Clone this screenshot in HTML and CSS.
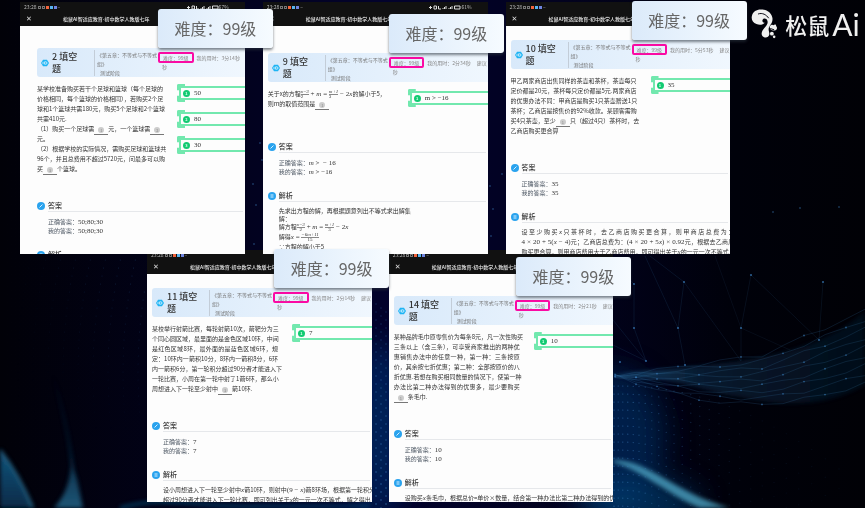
FILE: index.html
```html
<!DOCTYPE html>
<html lang="zh-CN">
<head>
  <meta charset="UTF-8">
  <meta name="viewport" content="width=device-width, initial-scale=1.0">
  <title>松鼠Ai</title>
  <link rel="stylesheet" href="styles.css">
</head>
<body>
  <svg class="backdrop" viewBox="0 0 865 508" preserveAspectRatio="none" aria-hidden="true">
    <defs>
      <filter id="soft" x="-50%" y="-50%" width="200%" height="200%"><feGaussianBlur stdDeviation="2"/></filter>
      <filter id="glow" x="-50%" y="-50%" width="200%" height="200%"><feGaussianBlur stdDeviation="14"/></filter>
      <linearGradient id="beam" x1="0" y1="0" x2="0" y2="1">
        <stop offset="0" stop-color="#0b4a78" stop-opacity="0"/>
        <stop offset="1" stop-color="#2a7ba3"/>
      </linearGradient>
      <linearGradient id="hill" x1="0" y1="0" x2="0" y2="1">
        <stop offset="0" stop-color="#15557c"/>
        <stop offset="1" stop-color="#062a48"/>
      </linearGradient>
      <linearGradient id="ribbon" x1="0" y1="0" x2="1" y2="0">
        <stop offset="0" stop-color="#2d7fae" stop-opacity=".8"/>
        <stop offset=".35" stop-color="#164a70" stop-opacity=".5"/>
        <stop offset="1" stop-color="#0c2c4a" stop-opacity=".4"/>
      </linearGradient>
    </defs>
    <g filter="url(#glow)">
      <ellipse cx="612" cy="440" rx="52" ry="70" fill="#04306a" opacity=".6"/>
      <ellipse cx="380" cy="430" rx="26" ry="90" fill="#042c6c" opacity=".7"/>
      <ellipse cx="640" cy="505" rx="60" ry="26" fill="#075089" opacity=".5"/>
    </g>
    <g filter="url(#soft)">
      <path d="M52 370C62 400 70 440 74 470C78 480 80 495 83 508H54C66 495 70 480 71 465C68 430 58 400 52 370Z" fill="url(#beam)" opacity=".7"/>
      <path d="M0 450C12 465 24 486 33 508H0Z" fill="url(#hill)"/>
      <path d="M0 450C12 465 24 486 33 508" fill="none" stroke="#2a7095" stroke-width="2"/>
      <path d="M613 460C650 460 672 492 730 508H700C668 495 645 472 613 462Z" fill="#4fa9c8" opacity=".75"/>
      <path d="M120 508C160 495 200 508 260 506H370" fill="none" stroke="#0f5f91" stroke-width="3" opacity=".6"/>
    </g>
    <path d="M613 376C690 362 800 370 865 311V385C830 405 790 408 740 397C705 393 690 378 613 376Z" fill="url(#ribbon)" filter="url(#soft)" opacity=".7"/>
    <g id="mesh" fill="none" stroke="#3978a8" stroke-width=".5"></g>
    <g id="dots" fill="#3c80c0"></g>
  </svg>

  <main class="board">
    <div class="row row-top">
      <article class="shot">
        <div class="sheet inset lead-l">
          <header class="bar">
            <div class="status"><span>23:28</span><i class="sig"></i><i class="sig"></i><i class="app o"></i><i class="app b"></i><i class="app p"></i><span>–</span>
              <span class="right"><svg viewBox="0 0 32 5"><path d="M0 2.500H3M1.500 1V4M5 1H7.500V4H5ZM9.500 1V4H12M14 4V3M15.500 4V2M17 4V1M20 4V3M21.500 4V2M23 4V1M25.500 1H31V4H25.500Z"/></svg>67%</span></div>
            <div class="nav"><button class="close" aria-label="关闭">✕</button><h1>松鼠AI智适应教育-初中数学人教版七年</h1></div>
          </header>
          <section class="content">
            <div class="card">
              <h2><svg class="hex" viewBox="0 0 10 10"><path d="M2.500 .8H7.500L10 5L7.500 9.200H2.500L0 5Z"/><path class="in" d="M2.500 3.500V6.500M4.500 3.500H6A1.500 1.500 0 0 1 6 6.500H4.500Z"/></svg><span>2 填空<br>题</span></h2>
              <div class="chapter"><p>《第五章：不等式与不等式<br>组》</p><p class="stage">测试阶段</p></div>
              <div class="meta"><div class="line"><span class="level">难度：99级</span><span>我的用时：3分14秒</span></div><div class="unit">秒</div></div>
            </div>
            <div class="work">
              <div class="question">
                <p>某学校准备购买若干个足球和篮球（每个足球的</p>
                <p>价格相同，每个篮球的价格相同），若购买2个足</p>
                <p>球和1个篮球共需180元，购买5个足球和2个篮球</p>
                <p class="end">共需410元.</p>
                <p>（1）购买一个足球需<span class="blank"><i>1</i></span>元，一个篮球需<span class="blank"><i>2</i></span></p>
                <p class="end">元。</p>
                <p>（2）根据学校的实际情况，需购买足球和篮球共</p>
                <p>96个，并且总费用不超过5720元，问最多可以购</p>
                <p class="end">买<span class="blank"><i>3</i></span>个篮球。</p>
              </div>
              <div class="fills">
                <label class="fill"><b>1</b><input type="text" value="50"></label>
                <label class="fill"><b>2</b><input type="text" value="80"></label>
                <label class="fill"><b>3</b><input type="text" value="30"></label>
              </div>
            </div>
            <h3><svg class="dot" viewBox="0 0 8 8"><circle cx="4" cy="4" r="4"/><path d="M2.500 5.500L5.500 2.500"/></svg>答案</h3>
            <div class="answers"><p>正确答案：<span class="num">50;80;30</span></p><p>我的答案：<span class="num">50;80;30</span></p></div>
            <h3><svg class="dot" viewBox="0 0 8 8"><circle cx="4" cy="4" r="4"/><path d="M2.500 3H5.500M2.500 5H5.500"/></svg>解析</h3>
          </section>
        </div>
        <div class="callout at-1 lead-l">难度：99级</div>
      </article>

      <article class="shot">
        <div class="sheet lead-xl">
          <header class="bar">
            <div class="status"><span>23:28</span><i class="sig"></i><i class="sig"></i><i class="app o"></i><i class="app b"></i><i class="app p"></i><span>–</span>
              <span class="right"><svg viewBox="0 0 32 5"><path d="M0 2.500H3M1.500 1V4M5 1H7.500V4H5ZM9.500 1V4H12M14 4V3M15.500 4V2M17 4V1M20 4V3M21.500 4V2M23 4V1M25.500 1H31V4H25.500Z"/></svg>61%</span></div>
            <div class="nav"><button class="close" aria-label="关闭">✕</button><h1>松鼠AI智适应教育-初中数学人教版七年</h1></div>
          </header>
          <section class="content">
            <div class="card">
              <h2><svg class="hex" viewBox="0 0 10 10"><path d="M2.500 .8H7.500L10 5L7.500 9.200H2.500L0 5Z"/><path class="in" d="M2.500 3.500V6.500M4.500 3.500H6A1.500 1.500 0 0 1 6 6.500H4.500Z"/></svg><span>9 填空<br>题</span></h2>
              <div class="chapter"><p>《第五章：不等式与不等式<br>组》</p><p class="stage">测试阶段</p></div>
              <div class="meta"><div class="line"><span class="level">难度：99级</span><span>我的用时：2分34秒</span><span>建议</span></div><div class="unit">秒</div></div>
            </div>
            <div class="work">
              <div class="question">
                <p class="end">关于x的方程<span class="frac"><i>x−3</i><i>2</i></span><span class="math"> + <i>m</i> = </span><span class="frac"><i>m+1</i><i>3</i></span><span class="math"> − 2<i>x</i></span>的解小于5，</p>
                <p class="end">则m的取值范围是<span class="blank"><i>1</i></span></p>
              </div>
              <div class="fills"><label class="fill"><b>1</b><input type="text" value="m &gt; −16"></label></div>
            </div>
            <h3><svg class="dot" viewBox="0 0 8 8"><circle cx="4" cy="4" r="4"/><path d="M2.500 5.500L5.500 2.500"/></svg>答案</h3>
            <div class="answers"><p>正确答案：<span class="num"><i>m</i> &gt; &nbsp;− 16</span></p><p>我的答案：<span class="num"><i>m</i> &gt; −16</span></p></div>
            <h3><svg class="dot" viewBox="0 0 8 8"><circle cx="4" cy="4" r="4"/><path d="M2.500 3H5.500M2.500 5H5.500"/></svg>解析</h3>
            <div class="solution">
              <p class="close-line">先求出方程的解，再根据题意列出不等式求出解集</p>
              <p class="close-line">解：</p>
              <p>解方程<span class="frac"><i>x−3</i><i>2</i></span><span class="math"> + <i>m</i> = </span><span class="frac"><i>m+1</i><i>3</i></span><span class="math"> − 2<i>x</i></span></p>
              <p>解得<span class="math"><i>x</i> = </span><span class="frac"><i>−6m+11</i><i>15</i></span></p>
              <p>∵方程的解小于5</p>
            </div>
          </section>
        </div>
        <div class="callout at-2 lead-xl">难度：99级</div>
      </article>

      <article class="shot">
        <div class="sheet lead-s">
          <header class="bar">
            <div class="status"><span>23:28</span><i class="sig"></i><i class="sig"></i><i class="app o"></i><i class="app b"></i><i class="app p"></i><span>–</span></div>
            <div class="nav"><button class="close" aria-label="关闭">✕</button><h1>松鼠AI智适应教育-初中数学人教版七年</h1></div>
          </header>
          <section class="content">
            <div class="card">
              <h2><svg class="hex" viewBox="0 0 10 10"><path d="M2.500 .8H7.500L10 5L7.500 9.200H2.500L0 5Z"/><path class="in" d="M2.500 3.500V6.500M4.500 3.500H6A1.500 1.500 0 0 1 6 6.500H4.500Z"/></svg><span>10 填空<br>题</span></h2>
              <div class="chapter"><p>《第五章：不等式与不等式<br>组》</p><p class="stage">测试阶段</p></div>
              <div class="meta"><div class="line"><span class="level">难度：99级</span><span>我的用时：5分53秒</span><span>建议</span></div><div class="unit">秒</div></div>
            </div>
            <div class="work">
              <div class="question">
                <p>甲乙两家商店出售同样的茶壶和茶杯，茶壶每只</p>
                <p>定价都是20元，茶杯每只定价都是5元.两家商店</p>
                <p>的优惠办法不同：甲商店是购买1只茶壶赠送1只</p>
                <p>茶杯；乙商店是按售价的92%收款。某顾客需购</p>
                <p>买4只茶壶，至少<span class="blank"><i>1</i></span>只（超过4只）茶杯时，去</p>
                <p class="end">乙商店购买更合算</p>
              </div>
              <div class="fills"><label class="fill"><b>1</b><input type="text" value="35"></label></div>
            </div>
            <h3><svg class="dot" viewBox="0 0 8 8"><circle cx="4" cy="4" r="4"/><path d="M2.500 5.500L5.500 2.500"/></svg>答案</h3>
            <div class="answers"><p>正确答案：<span class="num">35</span></p><p>我的答案：<span class="num">35</span></p></div>
            <h3><svg class="dot" viewBox="0 0 8 8"><circle cx="4" cy="4" r="4"/><path d="M2.500 3H5.500M2.500 5H5.500"/></svg>解析</h3>
            <div class="solution spread">
              <p>设至少购买<span class="math"><i>x</i></span>只茶杯时，去乙商店购买更合算，则甲商店总费为：</p>
              <p><span class="math">4 × 20 + 5(<i>x</i> − 4)</span>元；乙商店总费为：<span class="math">(4 × 20 + 5<i>x</i>) × 0.92</span>元，根据去乙商店</p>
              <p>购买更合算，则甲商店费用大于乙商店费用，即可得出关于<span class="math"><i>x</i></span>的一元一次不等式，</p>
            </div>
          </section>
        </div>
        <div class="callout at-2 lead-s">难度：99级</div>
      </article>

      <div class="brand">
        <svg class="squirrel" viewBox="0 0 84 92" aria-hidden="true">
          <path d="M30 1C50 0 66 13 67 30C67 45 57 51 55 60C54 67 58 72 57 79C55 88 44 92 36 84C30 77 34 67 41 59C48 51 54 45 51 36C49 28 39 27 36 33C34 38 38 42 43 42C37 49 26 50 17 46C5 42 0 31 3 20C6 8 17 1 30 1Z"/>
          <path d="M58 54C61 48 67 47 70 50C73 46 79 47 78 52C84 57 80 66 74 66C66 68 58 63 58 54Z"/>
          <circle cx="65" cy="76" r="6"/><circle cx="72" cy="86" r="4"/>
          <path class="cut" d="M22 15C35 10 48 17 55 28M60 60L72 64"/>
        </svg>
        <span class="brand-cn">松鼠</span><span class="brand-en">Ai</span>
      </div>
    </div>

    <div class="row row-bottom">
      <article class="shot">
        <div class="sheet lead-s">
          <header class="bar">
            <div class="status"><span>23:28</span><i class="sig"></i><i class="sig"></i><i class="app o"></i><i class="app b"></i><i class="app p"></i><span>–</span></div>
            <div class="nav"><button class="close" aria-label="关闭">✕</button><h1>松鼠AI智适应教育-初中数学人教版七年</h1></div>
          </header>
          <section class="content">
            <div class="card">
              <h2><svg class="hex" viewBox="0 0 10 10"><path d="M2.500 .8H7.500L10 5L7.500 9.200H2.500L0 5Z"/><path class="in" d="M2.500 3.500V6.500M4.500 3.500H6A1.500 1.500 0 0 1 6 6.500H4.500Z"/></svg><span>11 填空<br>题</span></h2>
              <div class="chapter"><p>《第五章：不等式与不等式<br>组》</p><p class="stage">测试阶段</p></div>
              <div class="meta"><div class="line"><span class="level">难度：99级</span><span>我的用时：2分14秒</span><span>建议</span></div><div class="unit">秒</div></div>
            </div>
            <div class="work">
              <div class="question">
                <p>某校举行射箭比赛，每轮射箭10次，箭靶分为三</p>
                <p>个同心圆区域，最里面的是金色区域10环，中间</p>
                <p>是红色区域8环，最外面的是蓝色区域6环，规</p>
                <p>定：10环内一箭积10分，8环内一箭积8分，6环</p>
                <p>内一箭积6分，第一轮积分超过90分者才能进入下</p>
                <p>一轮比赛，小周在第一轮中射了1箭6环，那么小</p>
                <p class="end">周想进入下一轮至少射中<span class="blank"><i>1</i></span>箭10环.</p>
              </div>
              <div class="fills"><label class="fill"><b>1</b><input type="text" value="7"></label></div>
            </div>
            <h3><svg class="dot" viewBox="0 0 8 8"><circle cx="4" cy="4" r="4"/><path d="M2.500 5.500L5.500 2.500"/></svg>答案</h3>
            <div class="answers"><p>正确答案：<span class="num">7</span></p><p>我的答案：<span class="num">7</span></p></div>
            <h3><svg class="dot" viewBox="0 0 8 8"><circle cx="4" cy="4" r="4"/><path d="M2.500 3H5.500M2.500 5H5.500"/></svg>解析</h3>
            <div class="solution">
              <p>设小周想进入下一轮至少射中<span class="math"><i>x</i></span>箭10环，则射中<span class="math">(9 − <i>x</i>)</span>箭8环场，根据第一轮积分</p>
              <p>超过90分者才能进入下一轮比赛，即可列出关于<span class="math"><i>x</i></span>的一元一次不等式，解之得出</p>
            </div>
          </section>
        </div>
        <div class="callout at-3 lead-s">难度：99级</div>
      </article>

      <article class="shot">
        <div class="sheet lead-l">
          <header class="bar">
            <div class="status"><span>23:28</span><i class="sig"></i><i class="sig"></i><i class="app o"></i><i class="app b"></i><i class="app p"></i><span>–</span></div>
            <div class="nav"><button class="close" aria-label="关闭">✕</button><h1>松鼠AI智适应教育-初中数学人教版七年</h1></div>
          </header>
          <section class="content">
            <div class="card">
              <h2><svg class="hex" viewBox="0 0 10 10"><path d="M2.500 .8H7.500L10 5L7.500 9.200H2.500L0 5Z"/><path class="in" d="M2.500 3.500V6.500M4.500 3.500H6A1.500 1.500 0 0 1 6 6.500H4.500Z"/></svg><span>14 填空<br>题</span></h2>
              <div class="chapter"><p>《第五章：不等式与不等式<br>组》</p><p class="stage">测试阶段</p></div>
              <div class="meta"><div class="line"><span class="level">难度：99级</span><span>我的用时：2分21秒</span><span>建议</span></div><div class="unit">秒</div></div>
            </div>
            <div class="work">
              <div class="question">
                <p>某种品牌毛巾原零售价为每条8元，凡一次性购买</p>
                <p>三条以上（含三条），可享受商家推出的两种优</p>
                <p>惠销售办法中的任意一种，第一种：三条按原</p>
                <p>价，其余按七折优惠；第二种：全部按原价的八</p>
                <p>折优惠.若想在购买相同数量的情况下，使第一种</p>
                <p>办法比第二种办法得到的优惠多，最少要购买</p>
                <p class="end"><span class="blank"><i>1</i></span>条毛巾.</p>
              </div>
              <div class="fills"><label class="fill"><b>1</b><input type="text" value="10"></label></div>
            </div>
            <h3><svg class="dot" viewBox="0 0 8 8"><circle cx="4" cy="4" r="4"/><path d="M2.500 5.500L5.500 2.500"/></svg>答案</h3>
            <div class="answers"><p>正确答案：<span class="num">10</span></p><p>我的答案：<span class="num">10</span></p></div>
            <h3><svg class="dot" viewBox="0 0 8 8"><circle cx="4" cy="4" r="4"/><path d="M2.500 3H5.500M2.500 5H5.500"/></svg>解析</h3>
            <div class="solution">
              <p>设购买<span class="math"><i>x</i></span>条毛巾，根据总价=单价×数量，结合第一种办法比第二种办法得到的优惠多</p>
            </div>
          </section>
        </div>
        <div class="callout at-3 lead-l">难度：99级</div>
      </article>
    </div>
  </main>
  <script src="script.js"></script>
</body>
</html>
```

FILE: styles.css
```css
* {
  box-sizing: border-box;
}

body {
  margin: 0;
  min-height: 100vh;
  overflow: hidden;
  background: linear-gradient(90deg, #010108 0%, #02021c 25%, #02022c 45%, #02021f 65%, #00010a 85%, #010106 100%);
  font-family: "Noto Sans CJK SC", "Noto Sans", sans-serif;
  color: #333;
}

h1, h2, h3, p {
  margin: 0;
}

.backdrop {
  position: fixed;
  inset: 0;
  width: 100%;
  height: 100%;
}

.board {
  position: relative;
  padding-top: 2px;
}

.row {
  display: flex;
  align-items: flex-start;
}

.row-top {
  padding-left: 20px;
  gap: 18px;
}

.row-bottom {
  padding-left: 17%;
  gap: 17px;
  margin-top: -4px;
}

.row-top .shot {
  width: 26.6%;
}

.row-bottom .shot {
  width: 31.3%;
}

.shot {
  position: relative;
  flex: none;
}

.sheet {
  position: relative;
  height: 252px;
  overflow: hidden;
  background: #fdfdfd;
}

.row-top .sheet {
  z-index: 1;
}

/* space between the app bar and the question card */
.lead-s { --lead: 14px; }
.lead-l { --lead: 22px; }
.lead-xl { --lead: 27px; }

/* app bar */
.bar {
  height: 24px;
  background: #111;
  color: #e4e4e4;
}

.status {
  display: flex;
  align-items: center;
  gap: 1px;
  height: 10px;
  padding: 0 16px 0 4px;
  font-size: 5px;
  line-height: 10px;
  color: #bbb;
}

.status .right {
  display: flex;
  align-items: center;
  margin-left: auto;
}

.status svg {
  width: 32px;
  height: 5px;
  fill: none;
  stroke: #ddd;
}

.sig {
  width: 3px;
  height: 3px;
  border: 1px solid #777;
}

.app {
  width: 3px;
  height: 3px;
}

.app.o { background: #f2643c; }
.app.b { background: #58b4ee; }
.app.p { background: #6f84e0; }

.nav {
  display: flex;
  align-items: center;
  height: 14px;
  padding-left: 5px;
}

.close {
  width: 8px;
  margin-right: 30px;
  padding: 0;
  border: 0;
  background: none;
  color: #ddd;
  font: 7px/8px "DejaVu Sans", sans-serif;
}

.nav h1 {
  font-size: 5px;
  line-height: 8px;
  font-weight: 500;
  white-space: nowrap;
}

.content {
  padding: var(--lead) 0 0 5px;
}

.inset .content {
  padding-left: 17px;
}

/* question card */
.card {
  display: grid;
  grid-template-columns: 57px 64px 1fr;
  height: 29px;
  border-radius: 3px 0 0 3px;
  background: linear-gradient(90deg, #d8e9fa, #f0f7fe);
}

.card h2 {
  display: flex;
  align-items: center;
  gap: 3px;
  padding-left: 4px;
  font-size: 9px;
  line-height: 12px;
  font-weight: 500;
  white-space: nowrap;
}

.hex {
  flex: none;
  width: 8px;
  height: 8px;
  fill: #1eb4f4;
}

.hex .in {
  fill: none;
  stroke: #e4f6ff;
}

.chapter {
  align-self: center;
  height: 26px;
  padding-left: 2px;
  border-left: 1px solid #c3cdd8;
  font-size: 5px;
  line-height: 9px;
  color: #777;
  white-space: nowrap;
}

.stage {
  padding-left: 3px;
}

.meta {
  padding-top: 4px;
  font-size: 5px;
  line-height: 7px;
  color: #888;
  white-space: nowrap;
  overflow: hidden;
}

.line {
  display: flex;
  align-items: center;
  gap: 6px;
}

.level {
  margin-right: -3px;
  padding: 0 3px;
  border: 2px solid #fb0aa4;
  border-radius: 2px;
}

.unit {
  padding-left: 4px;
}

.callout {
  position: absolute;
  z-index: 3;
  top: calc(var(--lead) - 15px);
  width: 115px;
  border-radius: 3px;
  background: linear-gradient(90deg, #dbeafa, #f6fbff);
  box-shadow: 0 2px 3px rgba(40, 50, 60, .6);
  color: #666;
  font-size: 16px;
  line-height: 39px;
  text-align: center;
}

.at-1 { left: 138px; }
.at-2 { left: 126px; }
.at-3 { left: 127px; }

/* question text and the answer boxes next to it */
.work {
  display: grid;
  grid-template-columns: 126px 1fr;
  gap: 14px;
  padding-top: 7px;
}

.question {
  min-height: 26px;
  font-size: 6px;
  white-space: nowrap;
}

.question p {
  height: 10px;
  line-height: 10px;
  text-align: justify;
  text-align-last: justify;
}

.question .end {
  text-align-last: left;
}

.blank {
  display: inline-block;
  width: 14px;
  height: 8px;
  border-bottom: 1px solid #777;
  line-height: 6px;
  text-align: center;
  text-align-last: center;
  vertical-align: -1px;
}

.blank i {
  display: block;
  width: 6px;
  height: 6px;
  margin: 0 auto;
  border-radius: 50%;
  background: #ccc;
  color: #888;
  font-size: 4px;
  font-style: normal;
}

.fills {
  display: flex;
  flex-direction: column;
  gap: 8px;
}

.fill {
  position: relative;
  display: flex;
  align-items: center;
  gap: 2px;
  height: 14px;
  margin: 2px -4px 2px 2px;
  padding-left: 2px;
  border: 2px solid #72e8ae;
}

.fill::before {
  content: "";
  position: absolute;
  inset: -4px auto -4px -4px;
  width: 6px;
  border: 2px solid #72e8ae;
  border-right: 0;
  border-radius: 2px 0 0 2px;
  clip-path: polygon(0 0, 100% 0, 100% 35%, 0 35%, 0 65%, 100% 65%, 100% 100%, 0 100%);
}

.fill b {
  flex: none;
  width: 7px;
  height: 7px;
  border-radius: 50%;
  background: #12ca72;
  color: #d8ffea;
  font-size: 4px;
  line-height: 7px;
  text-align: center;
}

.fill input {
  width: 40px;
  height: 8px;
  padding: 0 2px;
  border: 0;
  background: none;
  color: #333;
  font: 7px/8px "Liberation Serif", serif;
}

.work + h3 {
  margin-top: 26px;
}

/* section headings */
h3 {
  display: flex;
  align-items: center;
  gap: 3px;
  position: relative;
  height: 11px;
  font-size: 7px;
  line-height: 11px;
  font-weight: 500;
}

h3::after {
  content: "";
  position: absolute;
  left: 11px;
  right: 2px;
  bottom: -1px;
  border-bottom: 1px solid #e6e8eb;
}

.dot {
  width: 8px;
  height: 8px;
  fill: #2aa3ee;
}

.dot path {
  stroke: #d5efff;
}

.answers {
  height: 38px;
  padding: 6px 0 0 11px;
  font-size: 6px;
  color: #505a66;
}

.answers p {
  height: 9px;
  line-height: 9px;
}

.num, .math {
  font-family: "Liberation Serif", serif;
  font-size: 7px;
}

.num {
  color: #333;
}

.solution {
  padding: 5px 0 0 11px;
  margin-right: -4px;
  font-size: 6px;
  line-height: 10px;
  white-space: nowrap;
}

.solution p {
  height: 10px;
}

.spread p {
  text-align: justify;
  text-align-last: justify;
}

.solution .close-line {
  height: 8px;
}

.frac {
  display: inline-flex;
  flex-direction: column;
  align-items: center;
  vertical-align: middle;
  font-family: "Liberation Serif", serif;
  font-size: 5px;
  line-height: 4px;
}

.frac i + i {
  align-self: stretch;
  border-top: 1px solid #888;
  text-align: center;
  font-style: normal;
}

/* logo */
.brand {
  display: flex;
  align-items: center;
  margin-left: 3px;
  height: 44px;
  color: #f0f0f0;
  white-space: nowrap;
}

.squirrel {
  width: 27px;
  height: 30px;
  margin-right: 7px;
  fill: #f0f0f0;
}

.squirrel .cut {
  fill: none;
  stroke: #02020c;
  stroke-width: 3;
}

.brand-cn {
  font-size: 22px;
  line-height: 30px;
  font-weight: 500;
}

.brand-en {
  margin-left: 3px;
  font-family: Lato, sans-serif;
  font-size: 30px;
  line-height: 30px;
}
```

FILE: script.js
```javascript
const NS = "http://www.w3.org/2000/svg";
const dots = document.getElementById("dots");
const mesh = document.getElementById("mesh");

function dot(x, y, r, opacity) {
  const c = document.createElementNS(NS, "circle");
  c.setAttribute("cx", x);
  c.setAttribute("cy", y);
  c.setAttribute("r", r);
  c.setAttribute("opacity", opacity);
  dots.appendChild(c);
}

function line(points, opacity) {
  const p = document.createElementNS(NS, "polyline");
  p.setAttribute("points", points.map(pt => pt.join(",")).join(" "));
  p.setAttribute("opacity", opacity);
  mesh.appendChild(p);
}

// wave field, lower right
for (let k = 0; k < 16; k++) {
  for (let i = 0; i < 26; i++) {
    const x = 614 + i * (4 + i * 0.2);
    const d = (x - 620) / 90;
    const y = 386 + k * 8 + d * d * (14 + k * 2);
    if (x < 862 && y < 508) dot(x, y, 0.6, Math.max(0.1, 0.65 - i * 0.03));
  }
}

// wave field, left side
for (let k = 0; k < 9; k++) {
  for (let i = 0; i < 22; i++) {
    const y = 260 + i * 8;
    const x = 18 + k * 15 + Math.pow((i - 14) / 8, 2) * 4;
    if (x < 145) dot(x, y, 0.5, (0.06 + k * 0.04) * (1 - i / 24));
  }
}

// strip between the lower sheets
for (let k = 0; k < 26; k++) {
  for (let i = 0; i < 4; i++) dot(371 + i * 5, 300 + k * 8 + i * 4, 0.7, 0.3 + k * 0.02);
}

// linked points above the ribbon
const nodes = [[634, 284], [684, 282], [751, 275], [823, 282], [634, 328], [678, 328], [741, 328], [646, 361], [620, 362], [685, 365], [819, 340]];
nodes.forEach(n => dot(n[0], n[1], 1.1, 0.7));
line([[613, 262], [634, 284], [634, 328], [646, 361]], 0.3);
line([[650, 256], [684, 282], [678, 328], [685, 365]], 0.3);
line([[645, 256], [678, 328]], 0.3);
line([[684, 282], [741, 361], [741, 328], [751, 275], [819, 340], [823, 282]], 0.25);
line([[715, 256], [741, 328], [790, 350]], 0.2);
line([[613, 320], [646, 361], [613, 345]], 0.3);

// ribbon strands
for (let k = 0; k < 9; k++) {
  const pts = [];
  for (let i = 0; i <= 12; i++) {
    const x = 615 + i * 21;
    const top = 376 - i * 3 - Math.max(0, i - 7) * 6;
    const low = 376 + Math.sin(i / 12 * 2.9) * 28;
    const y = top + (low - top) * k / 8 + Math.sin(i * 2 + k * 3) * 2;
    pts.push([x, y]);
    if ((i + k) % 3 === 0) dot(x, y, 0.9, 0.6);
  }
  line(pts, 0.4);
}

// faint points in the upper gaps
[[253, 184], [260, 143], [256, 205], [254, 244], [262, 160], [493, 209], [491, 236], [490, 186], [502, 174], [800, 208], [839, 207], [773, 212]].forEach(n => dot(n[0], n[1], 1, 0.4));
```
